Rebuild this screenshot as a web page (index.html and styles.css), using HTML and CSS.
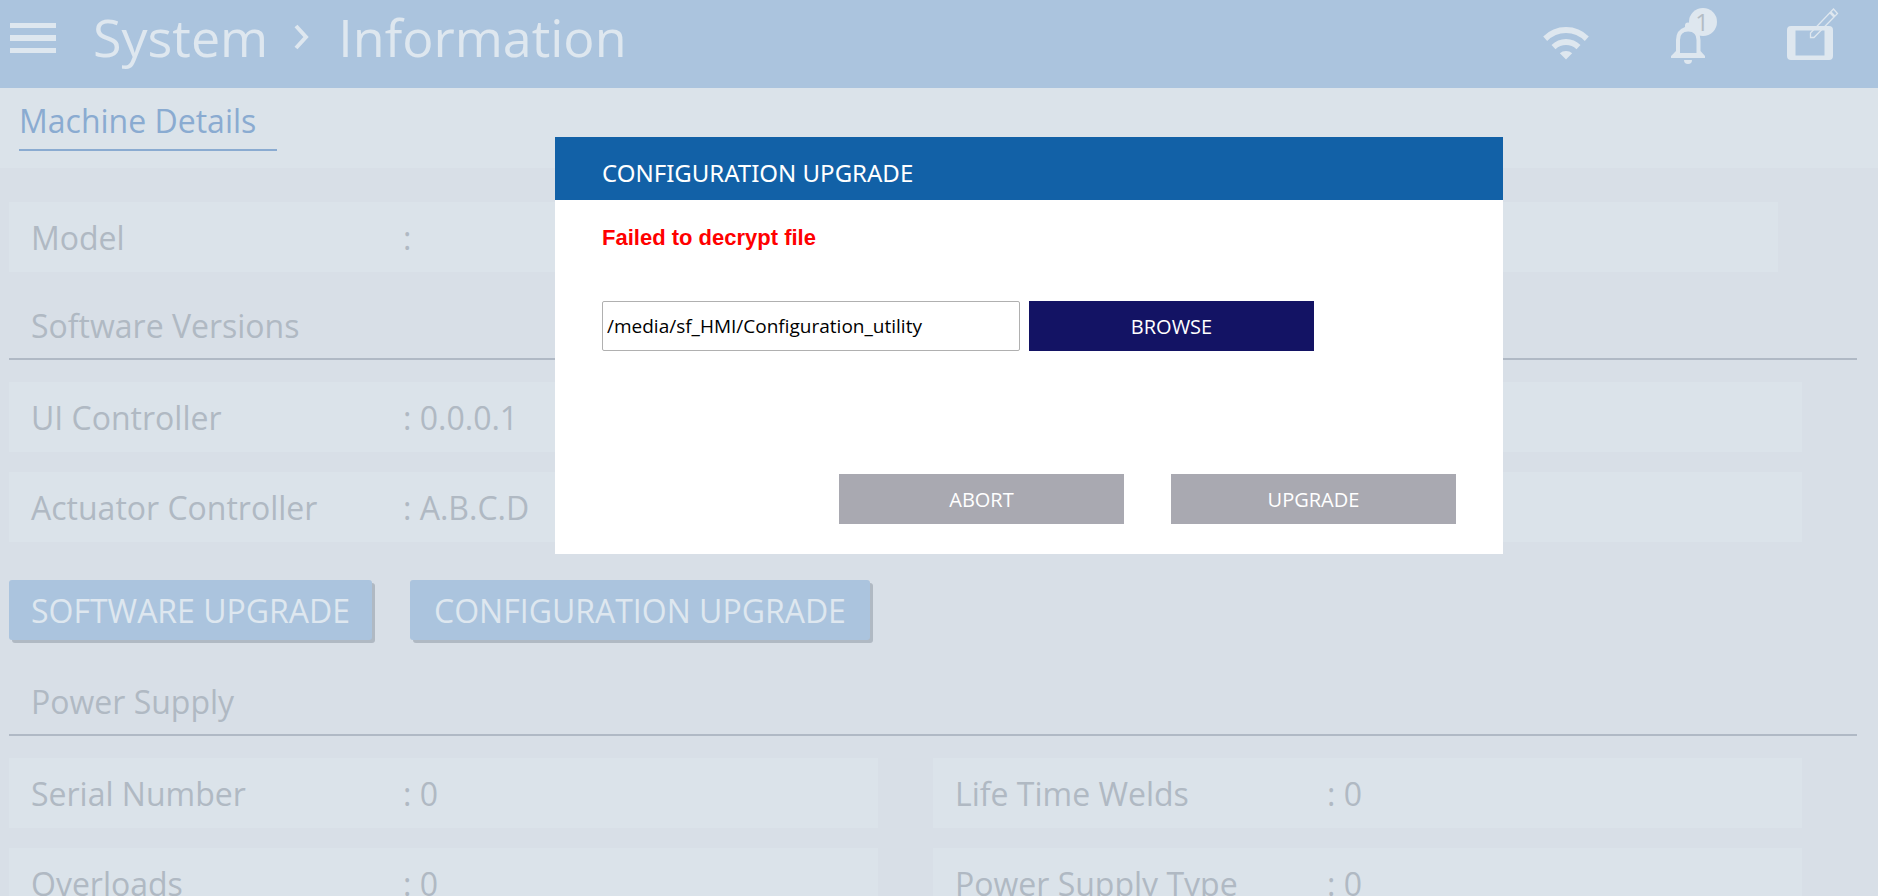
FILE: index.html
```html
<!DOCTYPE html>
<html lang="en">
<head>
<meta charset="utf-8">
<title>System Information</title>
<link rel="stylesheet" href="styles.css">
</head>
<body>
<header class="topbar">
  <button class="icon-button menu" aria-label="Menu">
    <svg width="46" height="30" viewBox="0 0 46 30"><path d="M0 0h46v5H0zM0 12h46v6H0zM0 25h46v5H0z" fill="currentColor"/></svg>
  </button>
  <nav class="crumbs" aria-label="Breadcrumb">
    <span>System</span>
    <svg class="chevron" width="16" height="26" viewBox="0 0 16 26"><path d="M2 2l10 11L2 24" fill="none" stroke="currentColor" stroke-width="4"/></svg>
    <span>Information</span>
  </nav>
  <div class="status">
    <button class="icon-button" aria-label="Network">
      <svg width="59" height="60" viewBox="1542 6 59 60" fill="currentColor"><path d="M1543.200 36.500Q1552.500 27 1566 27T1588.800 36.500L1584.800 41Q1577 33 1566 33T1547.200 41zM1551.500 45Q1557.500 39 1566 39T1580.500 45L1576.500 49.200Q1572 45 1566 45T1555.500 49.200zM1559.800 53.300Q1562.300 51 1566 51T1572.200 53.300L1566 59.500z"/></svg>
    </button>
    <button class="icon-button" aria-label="Notifications, 1 new">
      <svg width="48" height="60" viewBox="1670 6 48 60"><g fill="currentColor"><path fill-rule="evenodd" d="M1671 56L1676 51V40Q1676 30 1685 27V25.500A3 3 0 0 1 1691 25.500V27Q1700.500 30 1700.500 40V51L1705 56V58H1671zM1680 53H1696.500V40Q1696.500 31.500 1688.200 31.500T1680 40z"/><path d="M1684 60h8a4 4 0 0 1-8 0z"/><circle cx="1703" cy="22" r="14"/></g></svg>
      <span class="badge">1</span>
    </button>
    <button class="icon-button" aria-label="Edit screen">
      <svg width="52" height="60" viewBox="1787 6 52 60"><path fill="currentColor" fill-rule="evenodd" d="M1791 26h38a4 4 0 0 1 4 4v26a4 4 0 0 1-4 4h-38a4 4 0 0 1-4-4V30a4 4 0 0 1 4-4zM1795.500 30.500v25h29v-25z"/><g fill="none" stroke="currentColor" stroke-width="1.300"><path d="M1833.500 9l4 4.500-23.500 24h-3.500v-4.500zM1829.800 12.800l4.200 4.200M1831 12l3.600 3.800"/></g></svg>
    </button>
  </div>
</header>
<div class="tabs"><a class="tab" href="#machine">Machine Details</a></div>
<main class="page" id="machine">
  <div class="row row-model"><span class="label">Model</span><span>:</span></div>
  <h2 class="section">Software Versions</h2>
  <div class="rows">
    <div class="row"><span class="label">UI Controller</span><span>: 0.0.0.1</span></div>
    <div class="row"><span class="label">Actuator Controller</span><span>: A.B.C.D</span></div>
  </div>
  <div class="actions">
    <button class="action">SOFTWARE UPGRADE</button>
    <button class="action action-wide">CONFIGURATION UPGRADE</button>
  </div>
  <h2 class="section">Power Supply</h2>
  <div class="grid">
    <div class="row"><span class="label">Serial Number</span><span>: 0</span></div>
    <div class="row"><span class="label">Life Time Welds</span><span>: 0</span></div>
    <div class="row"><span class="label">Overloads</span><span>: 0</span></div>
    <div class="row"><span class="label">Power Supply Type</span><span>: 0</span></div>
  </div>
</main>
<div class="overlay">
  <form class="dialog" role="dialog" aria-labelledby="dialog-title">
    <h1 class="dialog-title" id="dialog-title">CONFIGURATION UPGRADE</h1>
    <div class="dialog-body">
      <p class="error" role="alert">Failed to decrypt file</p>
      <div class="picker">
        <input class="path" type="text" aria-label="Configuration file path" value="/media/sf_HMI/Configuration_utility">
        <button class="button browse" type="button">BROWSE</button>
      </div>
      <div class="dialog-actions">
        <button class="button" type="button">ABORT</button>
        <button class="button" type="button">UPGRADE</button>
      </div>
    </div>
  </form>
</div>
</body>
</html>
```
FILE: styles.css
```css
* { box-sizing: border-box; }

body {
  margin: 0;
  height: 100vh;
  overflow: hidden;
  background: #d8dfe7;
  color: #b0b9c3;
  font-family: "Open Sans", "Noto Sans", sans-serif;
  font-size: 32px;
}

button {
  border: 0;
  padding: 0;
  font-family: inherit;
  cursor: pointer;
}

.topbar {
  display: flex;
  align-items: flex-start;
  height: 88px;
  padding: 0 39px 0 10px;
  background: #abc4de;
  color: #dee7ef;
}

.icon-button {
  position: relative;
  background: none;
  color: inherit;
}

.icon-button svg { display: block; }

.menu { margin-top: 23px; }

.crumbs {
  display: flex;
  align-items: center;
  margin-left: 37px;
  font-size: 52px;
  line-height: 74px;
}

.chevron { margin: 0 28px 0 26px; }

.status {
  display: flex;
  gap: 69px;
  margin: 6px 0 0 auto;
}

.badge {
  position: absolute;
  top: 2px;
  left: 18px;
  width: 28px;
  color: #b3bcc5;
  font-size: 24px;
  line-height: 28px;
  text-align: center;
}

.tabs {
  display: flex;
  height: 80px;
  padding-left: 19px;
  background: #dbe3ea;
}

.tab {
  width: 258px;
  height: 63px;
  padding-top: 4px;
  border-bottom: 2px solid #8aabd1;
  color: #8aabd1;
  line-height: 58px;
  text-decoration: none;
}

.page { padding: 34px 21px 0 9px; }

.row {
  display: flex;
  align-items: center;
  width: 97%;
  height: 70px;
  padding-left: 22px;
  background: #dbe3ea;
}

.row-model { width: calc(100% - 79px); }

.label { width: 372px; }

.section {
  margin: 0 0 22px;
  padding: 22px 0 0 22px;
  border-bottom: 2px solid #b0b9c5;
  font-size: 32px;
  font-weight: 400;
  line-height: 64px;
}

.rows {
  display: grid;
  gap: 20px;
}

.actions {
  display: flex;
  gap: 38px;
  margin: 38px 0 8px;
}

.action {
  height: 60px;
  padding: 0 22px;
  border-radius: 3px;
  background: #abc4de;
  box-shadow: 3px 3px 0 #b0b9c3;
  color: #dee7ef;
  font-size: 32px;
}

.action-wide { padding: 0 24px; }

.grid {
  display: grid;
  grid-template-columns: 1fr 1fr;
  row-gap: 20px;
}

.grid .row { width: 94%; }

.overlay {
  position: fixed;
  inset: 0;
  display: flex;
  justify-content: center;
  align-items: flex-start;
  padding: 137px 0 0 180px;
}

.dialog {
  width: 100%;
  max-width: 948px;
  background: #fff;
}

.dialog-title {
  margin: 0;
  padding: 9px 47px 0;
  background: #1261a7;
  color: #fff;
  font-family: "Noto Sans", sans-serif;
  font-size: 24px;
  font-weight: 400;
  line-height: 54px;
}

.dialog-body { padding: 26px 47px 30px; }

.error {
  margin: 0 0 51px;
  color: #f00;
  font: bold 22px/24px "Liberation Sans", Arial, sans-serif;
}

.picker {
  display: flex;
  gap: 9px;
}

.path {
  width: 418px;
  height: 50px;
  padding: 0 4px;
  border: 1px solid #b0b0b0;
  border-radius: 2px;
  background: #fff;
  color: #000;
  font-family: inherit;
  font-size: 19px;
}

.button {
  width: 285px;
  height: 50px;
  background: #a9a9b1;
  color: #fff;
  font-size: 20px;
}

.browse { background: #131364; }

.dialog-actions {
  display: flex;
  justify-content: flex-end;
  gap: 47px;
  margin-top: 123px;
}
```
